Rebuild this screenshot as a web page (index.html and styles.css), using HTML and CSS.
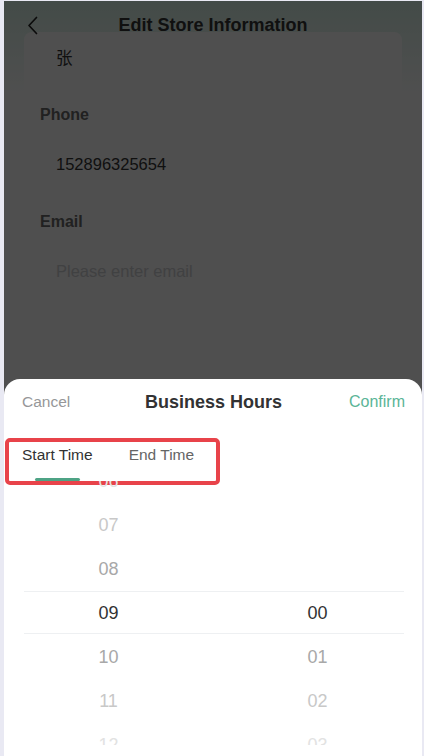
FILE: index.html
```html
<!DOCTYPE html>
<html lang="en">
<head>
    <meta charset="UTF-8">
    <meta name="viewport" content="width=device-width, initial-scale=1.0">
    <title>Edit Store Information</title>
    <link rel="stylesheet" href="styles.css">
</head>
<body>
    <div class="device">
        <div class="nav-bar">
            <span class="nav-back">
                <svg width="24" height="24" viewBox="0 0 24 24">
                    <polyline points="16.5,4.5 9,12.5 16.5,20.5" fill="none" stroke="#222" stroke-width="1.7" stroke-linecap="round" stroke-linejoin="round"/>
                </svg>
            </span>
            <h1 class="nav-title">Edit Store Information</h1>
            <span></span>
        </div>

        <div class="form-card">
            <div class="field">
                <input class="field-input" type="text" value="张">
            </div>
            <div class="field">
                <label class="field-label">Phone</label>
                <input class="field-input" type="text" value="152896325654">
            </div>
            <div class="field">
                <label class="field-label">Email</label>
                <input class="field-input" type="text" placeholder="Please enter email">
            </div>
        </div>

        <div class="overlay"></div>

        <div class="sheet">
            <div class="sheet-header">
                <span class="sheet-cancel">Cancel</span>
                <span class="sheet-title">Business Hours</span>
                <span class="sheet-confirm">Confirm</span>
            </div>

            <div class="tabs">
                <span class="tab active">Start Time</span>
                <span class="tab">End Time</span>
                <div class="tabs-mark"></div>
            </div>

            <div class="picker">
                <div class="picker-col">
                    <div class="picker-item far3">06</div>
                    <div class="picker-item far2">07</div>
                    <div class="picker-item far1">08</div>
                    <div class="picker-item selected">09</div>
                    <div class="picker-item far1">10</div>
                    <div class="picker-item far2">11</div>
                    <div class="picker-item far3">12</div>
                </div>
                <div class="picker-col">
                    <div class="picker-item"></div>
                    <div class="picker-item"></div>
                    <div class="picker-item"></div>
                    <div class="picker-item selected">00</div>
                    <div class="picker-item far1">01</div>
                    <div class="picker-item far2">02</div>
                    <div class="picker-item far3">03</div>
                </div>
                <div class="picker-frame"></div>
            </div>
        </div>
    </div>
</body>
</html>
```

FILE: styles.css
```css
body {
    margin: 0;
    height: 756px;
    overflow: hidden;
    background-color: #e9e9f3;
    font-family: "Liberation Sans", Arial, "Noto Sans CJK SC", sans-serif;
}
.device {
    position: relative;
    margin: 1px 2px 0 4px;
    height: 755px;
    overflow: hidden;
    background: linear-gradient(180deg, #d0e9df 0px, #e2efea 40px, #f4f5f5 90px) #f4f5f5;
}

/* top navigation */
.nav-bar {
    position: relative;
    z-index: 1;
    height: 48px;
    padding: 0 16px;
    display: grid;
    grid-template-columns: 40px 1fr 40px;
    align-items: center;
}
.nav-back {
    display: flex;
    align-items: center;
}
.nav-title {
    margin: 0;
    text-align: center;
    font-size: 18px;
    font-weight: bold;
    color: #333;
}

/* store form */
.form-card {
    margin: -17px 20px 0;
    padding: 0 16px 40px;
    background-color: #f6f6f6;
    border-radius: 8px;
}
.field {
    margin-bottom: 22px;
}
.field-label {
    display: block;
    margin-bottom: 13px;
    font-size: 16px;
    line-height: 22px;
    font-weight: bold;
    color: #666;
}
.field-input {
    display: block;
    width: 100%;
    height: 50px;
    box-sizing: border-box;
    padding: 0 16px;
    border: none;
    border-radius: 6px;
    background-color: #f5f5f5;
    font-family: "Liberation Sans", Arial, "Noto Sans CJK SC", sans-serif;
    font-size: 16.5px;
    color: #333;
    outline: none;
}
.field-input::placeholder {
    color: #c8c9cc;
}

.overlay {
    position: absolute;
    inset: 0;
    z-index: 2;
    background-color: rgba(0, 0, 0, 0.68);
}

/* business hours popup */
.sheet {
    position: absolute;
    left: 0;
    right: 0;
    bottom: 0;
    z-index: 3;
    padding-bottom: 11px;
    background-color: #fff;
    border-radius: 16px 16px 0 0;
}
.sheet-header {
    height: 46px;
    padding: 0 17px 0 18px;
    display: grid;
    grid-template-columns: 1fr auto 1fr;
    align-items: center;
    font-size: 16px;
}
.sheet-cancel {
    font-size: 15.5px;
    color: #969799;
}
.sheet-title {
    font-size: 18px;
    font-weight: bold;
    color: #323233;
}
.sheet-confirm {
    justify-self: end;
    color: #5bb597;
}

.tabs {
    position: relative;
    height: 56px;
    display: flex;
}
.tab {
    position: relative;
    padding: 4px 18px 0;
    display: flex;
    align-items: center;
    font-size: 15.5px;
    color: #646566;
}
.tab.active {
    color: #323233;
}
.tab.active::after {
    content: "";
    position: absolute;
    bottom: 0;
    left: 50%;
    width: 45px;
    height: 3px;
    margin-left: -22px;
    border-radius: 3px;
    background-color: #4ea385;
}
.tabs-mark {
    position: absolute;
    top: 13px;
    left: 1px;
    width: 215px;
    height: 47px;
    box-sizing: border-box;
    border: 4px solid #e8434a;
    border-radius: 5px;
    pointer-events: none;
}

.picker {
    position: relative;
    height: 264px;
    overflow: hidden;
    display: grid;
    grid-template-columns: 1fr 1fr;
}
.picker-col {
    margin-top: -22px;
}
.picker-item {
    height: 44px;
    line-height: 44px;
    text-align: center;
    font-size: 18px;
    color: #323233;
}
.picker-item.far1 {
    color: #a8a8a8;
}
.picker-item.far2 {
    color: #c8c8c8;
}
.picker-item.far3 {
    color: #e2e2e2;
}
.picker-frame {
    position: absolute;
    top: 110px;
    left: 20px;
    right: 18px;
    height: 43px;
    box-sizing: border-box;
    border-top: 1px solid #eef0f2;
    border-bottom: 1px solid #eef0f2;
    pointer-events: none;
}
```
